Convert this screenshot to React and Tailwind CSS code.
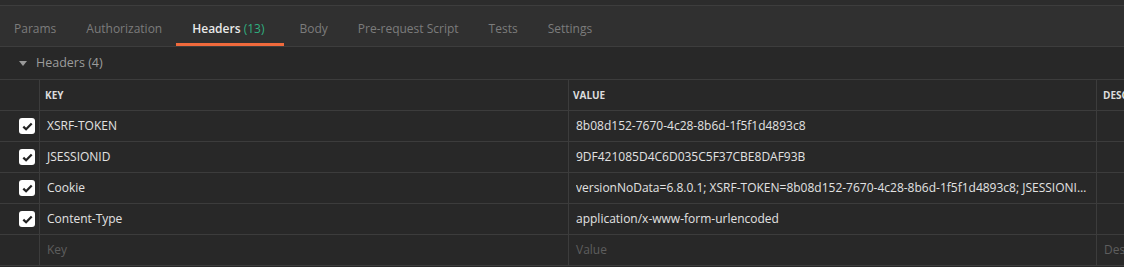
import React from "react";

const tabs = [
  { label: "Params" },
  { label: "Authorization" },
  { label: "Headers", count: "(13)", active: true },
  { label: "Body" },
  { label: "Pre-request Script" },
  { label: "Tests" },
  { label: "Settings" },
];

const rows = [
  { k: "XSRF-TOKEN", v: "8b08d152-7670-4c28-8b6d-1f5f1d4893c8" },
  { k: "JSESSIONID", v: "9DF421085D4C6D035C5F37CBE8DAF93B" },
  {
    k: "Cookie",
    v: "versionNoData=6.8.0.1; XSRF-TOKEN=8b08d152-7670-4c28-8b6d-1f5f1d4893c8; JSESSIONID=9DF421085D4C6D035C5F37CBE8DAF93B",
  },
  { k: "Content-Type", v: "application/x-www-form-urlencoded" },
];

function Check() {
  return (
    <div className="w-4 h-4 rounded-[3px] bg-white flex items-center justify-center">
      <svg width="11" height="9" viewBox="0 0 11 9">
        <path d="M1.3 4.6 L4.1 7.3 L9.7 1.5" fill="none" stroke="#222" strokeWidth="2.2" />
      </svg>
    </div>
  );
}

const grid = "grid grid-cols-[40px_529px_528px_1fr] border-b border-[#3c3c3c]";

export default function App() {
  return (
    <div
      className="w-[1124px] h-[267px] bg-[#282828] overflow-hidden text-[12px]"
      style={{ fontFamily: '"Open Sans", "Noto Sans", sans-serif' }}
    >
      <div className="h-[5px] bg-[#2c2c2c]" />
      <div className="h-[42px] bg-[#303030] border-t border-b border-[#3d3d3d] flex gap-[30px] pl-[14px]">
        {tabs.map((t) => (
          <div
            key={t.label}
            className={"relative flex items-center pt-[5px]" + (t.active ? " mr-[5px]" : "")}
          >
            <span className={t.active ? "text-[#e8e8e8] font-semibold" : "text-[#7c7c7c]"}>
              {t.label}
              {t.count && <span className="text-[#2fae7f] font-medium"> {t.count}</span>}
            </span>
            {t.active && (
              <div className="absolute left-[-16px] right-[-20px] bottom-0 h-[3px] bg-[#f06a3c]" />
            )}
          </div>
        ))}
      </div>
      <div className="h-[33px] border-b border-[#3c3c3c] flex items-center pl-[19px] pt-[1px]">
        <svg width="8" height="5" viewBox="0 0 8 5" className="mr-[9px]">
          <path d="M0 0 H8 L4 5 Z" fill="#9a9a9a" />
        </svg>
        <span className="text-[12.5px] text-[#9c9c9c] font-medium">Headers (4)</span>
      </div>
      <div className={grid + " h-[31px]"}>
        <div className="border-r border-[#3c3c3c]" />
        <div className="border-r border-[#3c3c3c] flex items-center pl-[5px] text-[10px] font-bold text-[#dcdcdc]">
          KEY
        </div>
        <div className="border-r border-[#3c3c3c] flex items-center pl-[4px] text-[10px] font-bold text-[#dcdcdc]">
          VALUE
        </div>
        <div className="flex items-center pl-[6px] text-[10px] font-bold text-[#dcdcdc] overflow-hidden whitespace-nowrap">
          DESC
        </div>
      </div>
      {rows.map((r) => (
        <div key={r.k} className={grid + " h-[31px]"}>
          <div className="border-r border-[#3c3c3c] flex items-center justify-end pr-[4px]">
            <Check />
          </div>
          <div className="border-r border-[#3c3c3c] flex items-center pl-[7px] text-[#e2e2e2]">
            {r.k}
          </div>
          <div className="border-r border-[#3c3c3c] flex items-center pl-[7px] pr-[8px] text-[#e2e2e2] min-w-0">
            <span className="truncate">{r.v}</span>
          </div>
          <div />
        </div>
      ))}
      <div className={grid + " h-[31px]"}>
        <div className="border-r border-[#3c3c3c]" />
        <div className="border-r border-[#3c3c3c] flex items-center pl-[7px] text-[#5e5e5e]">Key</div>
        <div className="border-r border-[#3c3c3c] flex items-center pl-[7px] text-[#5e5e5e]">Value</div>
        <div className="flex items-center pl-[7px] text-[#5e5e5e] overflow-hidden whitespace-nowrap">Des</div>
      </div>
    </div>
  );
}
